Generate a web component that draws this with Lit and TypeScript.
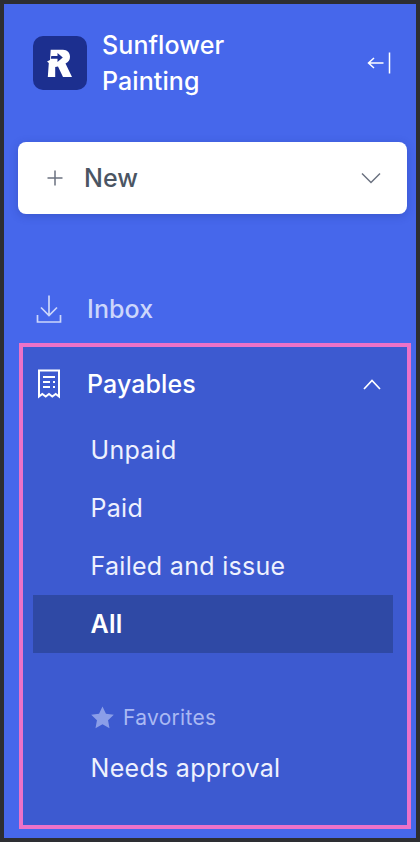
import {LitElement, html, css} from 'lit';
import {customElement} from 'lit/decorators.js';

@customElement('app-root')
export class AppRoot extends LitElement {
  override render() {
    return html`
      <nav class="sidebar">
        <header class="brand">
          <div class="logo">
            <svg width="26" height="29" viewBox="0 0 26 29">
              <path fill="#fff" d="M3.700.7H16c4.300 0 7 2.900 7 7 0 3-1.500 5.400-4.500 6.800L25 28h-9l-5-10.500-2.800.6V28H.8l1-14-1.800-1.500 3-1.500z"/>
              <path fill="#1c2f8f" d="M15.800 8.500 10.500 4v2.900H4.300l-.5 2.900h6.700V13z"/>
            </svg>
          </div>
          <div class="brand-name">Sunflower<br />Painting</div>
          <svg class="collapse" width="24" height="22" viewBox="0 0 24 22" fill="none" stroke="#fff" stroke-width="1.5">
            <path d="M1.500 11h15M7 6 1.500 11 7 16M22.500.5v21"/>
          </svg>
        </header>

        <button class="new">
          <svg width="16" height="16" viewBox="0 0 16 16" fill="none" stroke="#6b7280" stroke-width="1.5"><path d="M8 .5v15M.5 8h15"/></svg>
          <span>New</span>
          <svg class="chev" width="20" height="12" viewBox="0 0 20 12" fill="none" stroke="#6b7280" stroke-width="1.5"><path d="M1 1.500 10 10.500 19 1.500"/></svg>
        </button>

        <div class="item inbox">
          <svg width="26" height="28" viewBox="0 0 26 28" fill="none" stroke="#ccd6fb" stroke-width="1.7"><path d="M13 .5v20M5 12.500l8 8 8-8M1.500 20v7h23v-7"/></svg>
          <span>Inbox</span>
        </div>

        <section class="group">
          <div class="item head">
            <svg width="24" height="30" viewBox="0 0 24 30" fill="none" stroke="#fff" stroke-width="2"><path d="M2 1.500h20v26l-3.300-2.500-3.400 2.500-3.300-2.500-3.300 2.500-3.400-2.500L2 27.500z"/><path d="M6 8h12M6 13h7M16 13h2M6 18h7M16 18h2"/></svg>
            <span>Payables</span>
            <svg class="chev" width="18" height="11" viewBox="0 0 18 11" fill="none" stroke="#fff" stroke-width="1.7"><path d="M1 10 9 1.500 17 10"/></svg>
          </div>
          <div class="sub">Unpaid</div>
          <div class="sub">Paid</div>
          <div class="sub">Failed and issue</div>
          <div class="sub active">All</div>
          <div class="fav-label">
            <svg width="23" height="23" viewBox="0 0 22 22"><path fill="#8b9ee8" d="M11 .5l3.300 7 7.500.9-5.500 5.200 1.400 7.600L11 17.500l-6.700 3.700 1.400-7.600L.2 8.400l7.500-.9z"/></svg>
            <span>Favorites</span>
          </div>
          <div class="sub">Needs approval</div>
        </section>
      </nav>
    `;
  }

  static override styles = css`
    :host {
      display: block;
      width: 420px;
      height: 842px;
      box-sizing: border-box;
      padding: 4px;
      background: #2d2e32;
      font-family: 'Inter', sans-serif;
    }

    .sidebar {
      height: 100%;
      box-sizing: border-box;
      background: #4667eb;
      padding: 22px 9px 0 14px;
    }

    .brand {
      display: flex;
      align-items: center;
      padding-left: 15px;
      height: 74px;
    }

    .logo {
      width: 54px;
      height: 54px;
      border-radius: 10px;
      background: #1c2f8f;
      display: flex;
      align-items: center;
      justify-content: center;
      flex: none;
    }

    .brand-name {
      margin-left: 15px;
      font-size: 25px;
      font-weight: 450;
      letter-spacing: 0.1px;
      line-height: 36px;
      color: #fff;
    }

    .collapse {
      margin-left: auto;
      margin-right: 16px;
    }

    .new {
      display: flex;
      align-items: center;
      width: 389px;
      height: 72px;
      margin: 42px 0 0 0;
      padding: 0 26px 0 29px;
      border: none;
      border-radius: 8px;
      background: #fff;
      box-shadow: 0 2px 8px rgba(30, 50, 140, 0.3);
      font: 450 25px 'Inter', sans-serif;
      color: #4b5563;
    }

    .new span {
      margin-left: 21px;
    }

    .chev {
      margin-left: auto;
    }

    .item {
      display: flex;
      align-items: center;
      font-size: 25px;
      font-weight: 450;
      letter-spacing: 0.1px;
    }

    .inbox {
      height: 52px;
      margin-top: 69px;
      padding-left: 18px;
      color: #ccd6fb;
    }

    .inbox span {
      margin-left: 25px;
    }

    .group {
      box-sizing: border-box;
      width: 392px;
      height: 486px;
      margin: 8px 0 0 1px;
      border: 4px solid #ec72c8;
      background: #3d5ad0;
      color: #fff;
    }

    .head {
      height: 74px;
      padding: 0 26px 0 14px;
    }

    .head span {
      margin-left: 26px;
    }

    .sub {
      display: flex;
      align-items: center;
      height: 58px;
      margin: 0 14px 0 10px;
      padding-left: 57.5px;
      font-size: 25px;
      letter-spacing: 0.3px;
      color: #eef1fe;
    }

    .sub.active {
      font-weight: 600;
      color: #fff;
      background: #2f49a5;
    }

    .fav-label {
      display: flex;
      align-items: center;
      gap: 9px;
      margin: 42px 0 0 68px;
      height: 44px;
      font-size: 21px;
      letter-spacing: 0.3px;
      color: #aab9f3;
    }
  `;
}
